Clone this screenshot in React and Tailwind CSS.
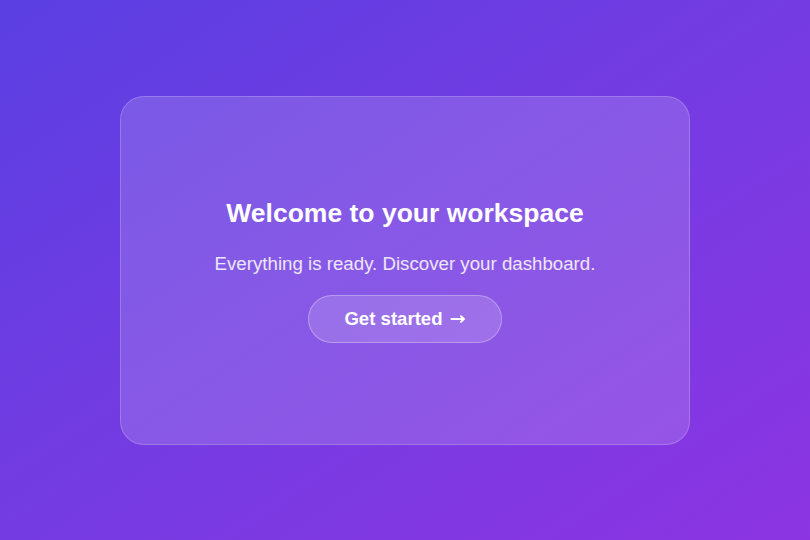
import React from 'react';

const App = () => {
  return (
    <div
      className="w-[810px] h-[540px] flex items-center justify-center bg-linear-to-br from-[#5a3fe2] to-[#8c34e2]"
      style={{ fontFamily: '"Liberation Sans", Arial, sans-serif' }}
    >
      {/* Glass card */}
      <div className="w-[570px] h-[349px] rounded-[24px] bg-white/15 border border-white/20 flex flex-col items-center justify-center">
        <h1 className="text-[26.5px] leading-[32px] font-bold text-white">
          Welcome to your workspace
        </h1>
        <p className="mt-[24px] text-[18.7px] leading-[22px] text-white/85">
          Everything is ready. Discover your dashboard.
        </p>
        <button className="mt-[20px] w-[194px] h-[48px] rounded-full bg-white/15 border border-white/30 text-white text-[18.6px] font-bold flex items-center justify-center gap-[7px]">
          <span>Get started</span>
          <svg width="16" height="12" viewBox="0 0 16 12" fill="none" stroke="currentColor" strokeWidth="2" strokeLinecap="round" strokeLinejoin="round">
            <path d="M1.5 6h12.5M11 3.2L14 6l-3 2.8" />
          </svg>
        </button>
      </div>
    </div>
  );
};

export default App;
